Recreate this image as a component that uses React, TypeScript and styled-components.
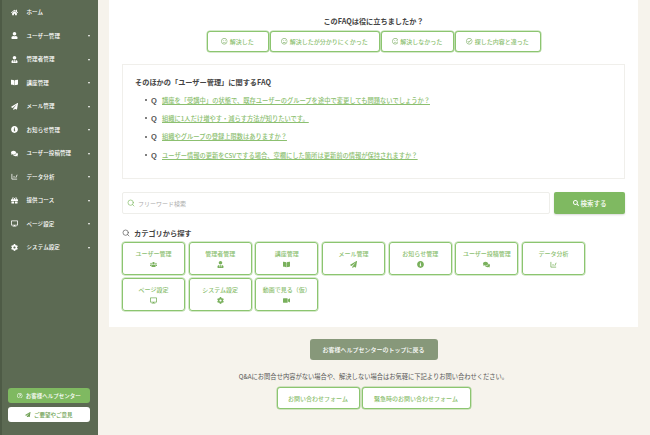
import React from "react";
import styled, { createGlobalStyle } from "styled-components";
import {
  FaHome,
  FaUser,
  FaUserTie,
  FaBookOpen,
  FaPaperPlane,
  FaInfoCircle,
  FaComments,
  FaGift,
  FaDesktop,
  FaCog,
  FaUsers,
  FaVideo,
  FaSearch,
  FaRegQuestionCircle,
  FaRegSmile,
  FaRegMeh,
  FaRegFrown,
  FaRegCheckCircle,
} from "react-icons/fa";
import { FiSearch } from "react-icons/fi";

const GREEN = "#7fb961";
const FONT = `"Noto Sans CJK JP", "Noto Sans", "Liberation Sans", sans-serif`;

const GlobalStyle = createGlobalStyle`
  html, body {
    margin: 0;
    padding: 0;
    height: 100%;
    overflow: hidden;
    background: #f6f3ec;
    font-family: ${FONT};
  }
  * {
    box-sizing: border-box;
  }
`;

const Page = styled.div`
  display: flex;
  width: 650px;
  height: 435px;
  overflow: hidden;
`;

const Sidebar = styled.aside`
  width: 98px;
  flex: none;
  height: 100%;
  background: #5c6a53;
  border-left: 2px solid #4e5b46;
  display: flex;
  flex-direction: column;
  justify-content: space-between;
  padding: 0.5px 0 13px;
`;

const NavList = styled.nav`
  display: flex;
  flex-direction: column;
`;

const NavItem = styled.div`
  height: 23.5px;
  display: flex;
  align-items: center;
  color: #fff;
  font-size: 5.5px;
  font-weight: 500;
  letter-spacing: 0.1px;
  position: relative;
  padding-left: 9px;
  svg {
    width: 7px;
    height: 7px;
    flex: none;
    margin-right: 8.5px;
  }
`;

const Caret = styled.span`
  position: absolute;
  right: 8px;
  top: 11px;
  width: 0;
  height: 0;
  border-left: 1.5px solid transparent;
  border-right: 1.5px solid transparent;
  border-top: 2px solid #fff;
`;

const SideButtons = styled.div`
  display: flex;
  flex-direction: column;
  gap: 4px;
  padding: 0 8px 0 6px;
`;

const SideButton = styled.div<{ $white?: boolean }>`
  height: 15px;
  border-radius: 3px;
  display: flex;
  align-items: center;
  justify-content: center;
  gap: 3px;
  font-size: 5.5px;
  font-weight: 500;
  background: ${({ $white }) => ($white ? "#fff" : GREEN)};
  color: ${({ $white }) => ($white ? "#6d9f52" : "#fff")};
  svg {
    width: 5.5px;
    height: 5.5px;
  }
`;

const Main = styled.main`
  flex: 1;
  min-width: 0;
  padding-left: 11px;
  padding-right: 12px;
`;

const Card = styled.section`
  height: 327px;
  background: #fff;
  padding: 16px 13px 0;
  display: flex;
  flex-direction: column;
`;

const FeedbackTitle = styled.h2`
  margin: 0;
  text-align: center;
  font-size: 7.2px;
  line-height: 10px;
  font-weight: 700;
  color: #444;
`;

const FeedbackRow = styled.div`
  display: flex;
  justify-content: center;
  gap: 1px;
  margin-top: 5px;
`;

const OutlineButton = styled.div<{ $w: number; $h: number }>`
  width: ${({ $w }) => $w}px;
  height: ${({ $h }) => $h}px;
  border: 1px solid #8cc570;
  box-shadow: 0 0 0 0.5px rgba(140, 197, 112, 0.7);
  border-radius: 3px;
  background: #fff;
  color: #8cc070;
  font-size: 6px;
  font-weight: 500;
  display: flex;
  align-items: center;
  justify-content: center;
  gap: 2px;
  svg {
    width: 6.5px;
    height: 6.5px;
    color: #8fb97a;
  }
`;

const FaqBox = styled.div`
  margin-top: 12px;
  height: 115px;
  flex: none;
  border: 1px solid #f0efeb;
  padding: 12px 12px 0;
`;

const FaqTitle = styled.h3`
  margin: 0 0 4px;
  font-size: 7.2px;
  line-height: 10px;
  font-weight: 700;
  color: #444;
`;

const FaqList = styled.ul`
  margin: 0;
  padding: 0;
  list-style: none;
`;

const FaqItem = styled.li`
  height: 18.3px;
  display: flex;
  align-items: center;
  padding-left: 12px;
  position: relative;
  &::before {
    content: "";
    position: absolute;
    left: 10px;
    top: 8px;
    width: 2px;
    height: 2px;
    border-radius: 50%;
    background: #555;
  }
`;

const QMark = styled.span`
  font-family: "Liberation Sans", sans-serif;
  font-weight: 700;
  font-size: 7.5px;
  color: #555;
  width: 10px;
  margin-left: 4px;
  flex: none;
`;

const FaqLink = styled.a`
  font-size: 6.27px;
  color: #8cc070;
  text-decoration: underline;
  font-weight: 500;
  white-space: nowrap;
  margin-left: 1px;
`;

const SearchRow = styled.div`
  display: flex;
  gap: 4px;
  margin-top: 13px;
`;

const SearchInput = styled.div`
  flex: 1;
  height: 22px;
  border: 1px solid #eeeeea;
  border-radius: 2px;
  display: flex;
  align-items: center;
  gap: 3px;
  padding-left: 4px;
  color: #aaa;
  font-size: 6px;
  svg {
    width: 8px;
    height: 8px;
    color: ${GREEN};
  }
`;

const SearchButton = styled.div`
  width: 71px;
  height: 22px;
  border-radius: 2px;
  background: ${GREEN};
  box-shadow: 0 1px 2px rgba(0, 0, 0, 0.15);
  color: #fff;
  font-size: 6.5px;
  font-weight: 500;
  display: flex;
  align-items: center;
  justify-content: center;
  gap: 2px;
  svg {
    width: 6px;
    height: 6px;
  }
`;

const CategoryTitle = styled.h3`
  margin: 14px 0 0;
  display: flex;
  align-items: center;
  gap: 4px;
  font-size: 7.2px;
  line-height: 10px;
  font-weight: 700;
  color: #444;
  svg {
    width: 8px;
    height: 8px;
    color: #555;
  }
`;

const TileGrid = styled.div`
  display: grid;
  grid-template-columns: repeat(7, 63px);
  grid-auto-rows: 32.5px;
  column-gap: 3.7px;
  row-gap: 3.5px;
  margin-top: 4px;
`;

const Tile = styled.div`
  border: 1px solid #8cc570;
  box-shadow: 0 0 0 0.5px rgba(140, 197, 112, 0.7);
  border-radius: 3px;
  color: #8cc070;
  font-size: 6px;
  font-weight: 500;
  display: flex;
  flex-direction: column;
  align-items: center;
  justify-content: center;
  gap: 2.5px;
  line-height: 9px;
  svg {
    width: 7px;
    height: 7px;
    color: #79b05c;
  }
`;

const Footer = styled.div`
  display: flex;
  flex-direction: column;
  align-items: center;
`;

const BackButton = styled.div`
  margin-top: 12px;
  width: 128px;
  height: 21px;
  border-radius: 3px;
  background: #87987a;
  color: #fff;
  font-size: 6px;
  font-weight: 500;
  display: flex;
  align-items: center;
  justify-content: center;
`;

const FooterNote = styled.p`
  margin: 12px 0 0;
  font-size: 6.28px;
  line-height: 9px;
  color: #555;
  white-space: nowrap;
`;

const ContactRow = styled.div`
  display: flex;
  gap: 2px;
  margin-top: 6px;
`;

// axis with a short rising line, as the reference's chart glyph
const ChartIcon = () => (
  <svg viewBox="0 0 16 16" fill="none" stroke="currentColor" strokeWidth="1.8">
    <path d="M2 2v12h12" />
    <path d="M5 9h4" />
    <path d="M11 11l3-7" />
  </svg>
);

const navItems: [React.ComponentType, string, boolean][] = [
  [FaHome, "ホーム", false],
  [FaUser, "ユーザー管理", true],
  [FaUserTie, "管理者管理", true],
  [FaBookOpen, "講座管理", true],
  [FaPaperPlane, "メール管理", true],
  [FaInfoCircle, "お知らせ管理", true],
  [FaComments, "ユーザー投稿管理", true],
  [ChartIcon, "データ分析", true],
  [FaGift, "提供コース", true],
  [FaDesktop, "ページ設定", true],
  [FaCog, "システム設定", true],
];

const feedback: [React.ComponentType, string, number][] = [
  [FaRegSmile, "解決した", 62],
  [FaRegMeh, "解決したが分かりにくかった", 110],
  [FaRegFrown, "解決しなかった", 73],
  [FaRegCheckCircle, "探した内容と違った", 86],
];

const faqs = [
  "講座を「受講中」の状態で、既存ユーザーのグループを途中で変更しても問題ないでしょうか？",
  "組織に1人だけ増やす・減らす方法が知りたいです。",
  "組織やグループの登録上限数はありますか？",
  "ユーザー情報の更新をCSVでする場合、空欄にした箇所は更新前の情報が保持されますか？",
];

const tiles: [React.ComponentType, string][] = [
  [FaUsers, "ユーザー管理"],
  [FaUserTie, "管理者管理"],
  [FaBookOpen, "講座管理"],
  [FaPaperPlane, "メール管理"],
  [FaInfoCircle, "お知らせ管理"],
  [FaComments, "ユーザー投稿管理"],
  [ChartIcon, "データ分析"],
  [FaDesktop, "ページ設定"],
  [FaCog, "システム設定"],
  [FaVideo, "動画で見る（仮）"],
];

const App = () => (
  <Page>
    <GlobalStyle />
    <Sidebar>
      <NavList>
        {navItems.map(([Icon, label, caret]) => (
          <NavItem key={label}>
            <Icon />
            {label}
            {caret && <Caret />}
          </NavItem>
        ))}
      </NavList>
      <SideButtons>
        <SideButton>
          <FaRegQuestionCircle />
          お客様ヘルプセンター
        </SideButton>
        <SideButton $white>
          <FaPaperPlane />
          ご要望やご意見
        </SideButton>
      </SideButtons>
    </Sidebar>
    <Main>
      <Card>
        <FeedbackTitle>このFAQは役に立ちましたか？</FeedbackTitle>
        <FeedbackRow>
          {feedback.map(([Icon, label, w]) => (
            <OutlineButton key={label} $w={w} $h={21}>
              <Icon />
              {label}
            </OutlineButton>
          ))}
        </FeedbackRow>
        <FaqBox>
          <FaqTitle>そのほかの「ユーザー管理」に関するFAQ</FaqTitle>
          <FaqList>
            {faqs.map((q) => (
              <FaqItem key={q}>
                <QMark>Q</QMark>
                <FaqLink>{q}</FaqLink>
              </FaqItem>
            ))}
          </FaqList>
        </FaqBox>
        <SearchRow>
          <SearchInput>
            <FiSearch />
            フリーワード検索
          </SearchInput>
          <SearchButton>
            <FaSearch />
            検索する
          </SearchButton>
        </SearchRow>
        <CategoryTitle>
          <FiSearch />
          カテゴリから探す
        </CategoryTitle>
        <TileGrid>
          {tiles.map(([Icon, label]) => (
            <Tile key={label}>
              {label}
              <Icon />
            </Tile>
          ))}
        </TileGrid>
      </Card>
      <Footer>
        <BackButton>お客様ヘルプセンターのトップに戻る</BackButton>
        <FooterNote>
          Q&amp;Aにお問合せ内容がない場合や、解決しない場合はお気軽に下記よりお問い合わせください。
        </FooterNote>
        <ContactRow>
          <OutlineButton $w={83} $h={22}>お問い合わせフォーム</OutlineButton>
          <OutlineButton $w={109} $h={22}>緊急時のお問い合わせフォーム</OutlineButton>
        </ContactRow>
      </Footer>
    </Main>
  </Page>
);

export default App;
